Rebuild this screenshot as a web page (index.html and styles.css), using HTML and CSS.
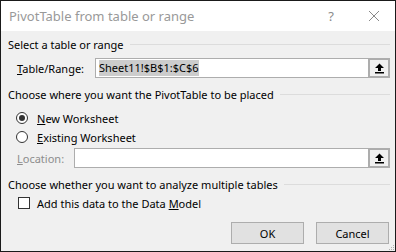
FILE: index.html
```html
<!DOCTYPE html>
<html lang="en">
<head>
  <meta charset="UTF-8" />
  <title>PivotTable from table or range</title>
  <link rel="stylesheet" href="styles.css">
</head>
<body>
  <div class="dialog">
    <div class="titlebar">
      <span class="title">PivotTable from table or range</span>
      <span class="help">?</span>
      <svg class="close" width="12" height="12" viewBox="0 0 12 12">
        <path d="M1 1L11 11M11 1L1 11" stroke="#8a8a8a" stroke-width="1" fill="none"/>
      </svg>
    </div>

    <div class="content">
      <div class="group first">Select a table or range</div>
      <div class="row field">
        <label class="label"><u>T</u>able/Range:</label>
        <div class="input"><span class="sel">Sheet11!$B$1:$C$6</span></div>
        <div class="pick">
          <svg width="11" height="11" viewBox="0 0 11 11">
            <path d="M5.5 0.5L1 5H4V8H7V5H10Z" fill="#000"/>
            <rect x="1" y="9" width="9" height="1.5" fill="#000"/>
          </svg>
        </div>
      </div>

      <div class="group">Choose where you want the PivotTable to be placed</div>
      <div class="row option spaced">
        <span class="radio checked"></span>
        <span><u>N</u>ew Worksheet</span>
      </div>
      <div class="row option">
        <span class="radio"></span>
        <span><u>E</u>xisting Worksheet</span>
      </div>
      <div class="row field tight">
        <label class="label disabled loc"><u>L</u>ocation:</label>
        <div class="input"></div>
        <div class="pick">
          <svg width="11" height="11" viewBox="0 0 11 11">
            <path d="M5.5 0.5L1 5H4V8H7V5H10Z" fill="#000"/>
            <rect x="1" y="9" width="9" height="1.5" fill="#000"/>
          </svg>
        </div>
      </div>

      <div class="group">Choose whether you want to analyze multiple tables</div>
      <div class="row option">
        <span class="check"></span>
        <span>Add this data to the Data <u>M</u>odel</span>
      </div>

      <div class="buttons">
        <button class="btn">OK</button>
        <button class="btn">Cancel</button>
      </div>
    </div>
    <svg class="grip" width="7" height="7" viewBox="0 0 7 7">
      <rect x="5" y="1" width="1" height="1" fill="#b0b0b0"/>
      <rect x="3" y="3" width="1" height="1" fill="#b0b0b0"/>
      <rect x="5" y="3" width="1" height="1" fill="#b0b0b0"/>
      <rect x="1" y="5" width="1" height="1" fill="#b0b0b0"/>
      <rect x="3" y="5" width="1" height="1" fill="#b0b0b0"/>
      <rect x="5" y="5" width="1" height="1" fill="#b0b0b0"/>
    </svg>
  </div>
</body>
</html>
```

FILE: styles.css
```css
body {
  margin: 0;
  font-family: "Noto Sans", "Open Sans", sans-serif;
  font-size: 11px;
  color: #000;
}
.dialog {
  position: relative;
  width: 396px;
  height: 252px;
  box-sizing: border-box;
  border: 1px solid #1a1a1a;
  background: #f0f0f0;
}
.titlebar {
  height: 30px;
  background: #fff;
  display: flex;
  align-items: center;
  padding: 0 15px 0 8px;
}
.title {
  flex: 1;
  color: #999;
  font-size: 13px;
}
.help {
  color: #8a8a8a;
  font-size: 13px;
  margin-right: 34px;
}
.content {
  padding: 5px 5px 0 7px;
}
.group {
  display: flex;
  align-items: center;
  height: 16px;
  margin-top: 8px;
}
.group.first {
  margin-top: 0;
}
.group::after {
  content: "";
  flex: 1;
  height: 1px;
  background: #dcdcdc;
  margin-left: 6px;
}
.row {
  display: flex;
  align-items: center;
}
.field {
  height: 20px;
  margin-top: 6px;
}
.field.tight {
  margin-top: 3px;
}
.label {
  flex-shrink: 0;
  width: 87px;
  padding-left: 9px;
  box-sizing: border-box;
}
.loc {
  width: 66px;
}
.disabled {
  color: #8d8d8d;
}
.input {
  flex: 1;
  height: 20px;
  box-sizing: border-box;
  border: 1px solid #adadad;
  border-right: none;
  background: #fff;
  display: flex;
  align-items: center;
  padding-left: 3px;
}
.sel {
  background: #cccccc;
  line-height: 16px;
}
.pick {
  flex-shrink: 0;
  width: 22px;
  height: 20px;
  box-sizing: border-box;
  border: 2px solid #adadad;
  background: #f0f0f0;
  display: flex;
  align-items: center;
  justify-content: center;
}
.option {
  height: 16px;
  margin-top: 3px;
}
.option.spaced {
  margin-top: 8px;
}
.radio {
  flex-shrink: 0;
  width: 12px;
  height: 12px;
  box-sizing: border-box;
  border: 1px solid #333;
  border-radius: 50%;
  background: #fff;
  margin: 0 9px 0 8px;
  display: flex;
  align-items: center;
  justify-content: center;
}
.radio.checked::after {
  content: "";
  width: 6px;
  height: 6px;
  border-radius: 50%;
  background: #333;
}
.check {
  flex-shrink: 0;
  width: 12px;
  height: 12px;
  box-sizing: border-box;
  border: 1px solid #333;
  background: #fff;
  margin: 0 7px 0 10px;
}
.buttons {
  display: flex;
  justify-content: flex-end;
  gap: 12px;
  margin-top: 11px;
  padding-right: 1px;
}
.btn {
  width: 73px;
  height: 22px;
  background: #e1e1e1;
  border: 1px solid #adadad;
  font-family: "Noto Sans", "Open Sans", sans-serif;
  font-size: 11px;
  padding: 0;
}
.grip {
  position: absolute;
  right: 0;
  bottom: 0;
}
```
